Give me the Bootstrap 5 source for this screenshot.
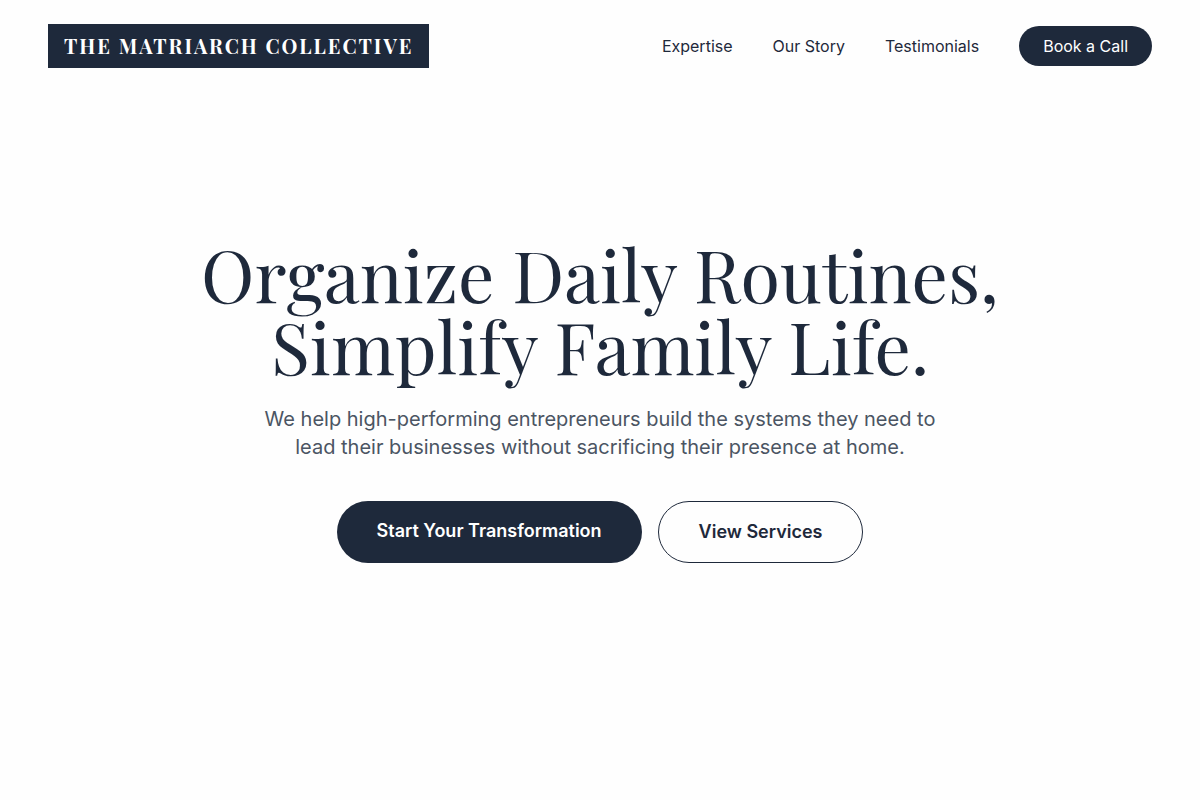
<!DOCTYPE html>
<html lang="en">
<head>
<meta charset="utf-8">
<meta name="viewport" content="width=device-width, initial-scale=1">
<title>The Matriarch Collective</title>
<link href="https://cdn.jsdelivr.net/npm/bootstrap@5.3.0/dist/css/bootstrap.min.css" rel="stylesheet">
<style>
:root { --navy: #1e293b; --slate: #4b5563; --display: "Playfair Display", "Liberation Serif", serif; }
body { font-family: Inter, "Liberation Sans", sans-serif; color: var(--navy); background: #fefefe; }
.brand-mark { font-family: var(--display); font-size: 20px; line-height: 28px; font-weight: 700; letter-spacing: 2px; background: var(--navy); color: #fff; padding: 8px 16px; }
.brand-mark:hover { color: #fff; }
.site-links { gap: 40px; }
.site-links .nav-link { color: var(--navy); line-height: 24px; }
.btn-navy { --bs-btn-color: #fff; --bs-btn-bg: var(--navy); --bs-btn-border-color: var(--navy); --bs-btn-hover-color: #fff; --bs-btn-hover-bg: #334155; }
.btn-line { --bs-btn-color: var(--navy); --bs-btn-border-color: var(--navy); --bs-btn-hover-color: #fff; --bs-btn-hover-bg: var(--navy); }
.btn-call { padding: 8px 24px; line-height: 24px; }
/* the bottom padding equals the header's height, so the hero centres in the window */
.hero { padding: 0 24px 92px; }
.hero-title { font-family: var(--display); font-size: 72px; line-height: 72px; font-weight: 400; margin-bottom: 24px; }
.hero-text { font-size: 20px; line-height: 28px; color: var(--slate); max-width: 672px; margin-bottom: 40px; }
.btn-hero { font-size: 18px; line-height: 28px; font-weight: 600; padding: 16px 40px; }
.btn-hero.btn-navy { padding-bottom: 18px; }
</style>
</head>
<body class="min-vh-100 d-flex flex-column">
<header>
<nav class="navbar navbar-expand-md px-5 py-4" aria-label="Main">
<a class="navbar-brand brand-mark m-0" href="#">THE MATRIARCH COLLECTIVE</a>
<div class="navbar-nav site-links ms-auto align-items-center">
<a class="nav-link p-0" href="#expertise">Expertise</a>
<a class="nav-link p-0" href="#story">Our Story</a>
<a class="nav-link p-0" href="#testimonials">Testimonials</a>
<button type="button" class="btn btn-navy btn-call border-0 rounded-pill">Book a Call</button>
</div>
</nav>
</header>
<main class="hero flex-grow-1 d-flex flex-column align-items-center justify-content-center text-center">
<h1 class="hero-title">Organize Daily Routines,<br>Simplify Family Life.</h1>
<p class="hero-text">We help high-performing entrepreneurs build the systems they need to lead their businesses without sacrificing their presence at home.</p>
<div class="d-flex flex-wrap justify-content-center gap-3">
<button type="button" class="btn btn-navy btn-hero border-0 rounded-pill">Start Your Transformation</button>
<button type="button" class="btn btn-line btn-hero rounded-pill">View Services</button>
</div>
</main>
<script src="https://cdn.jsdelivr.net/npm/bootstrap@5.3.0/dist/js/bootstrap.bundle.min.js"></script>
</body>
</html>
